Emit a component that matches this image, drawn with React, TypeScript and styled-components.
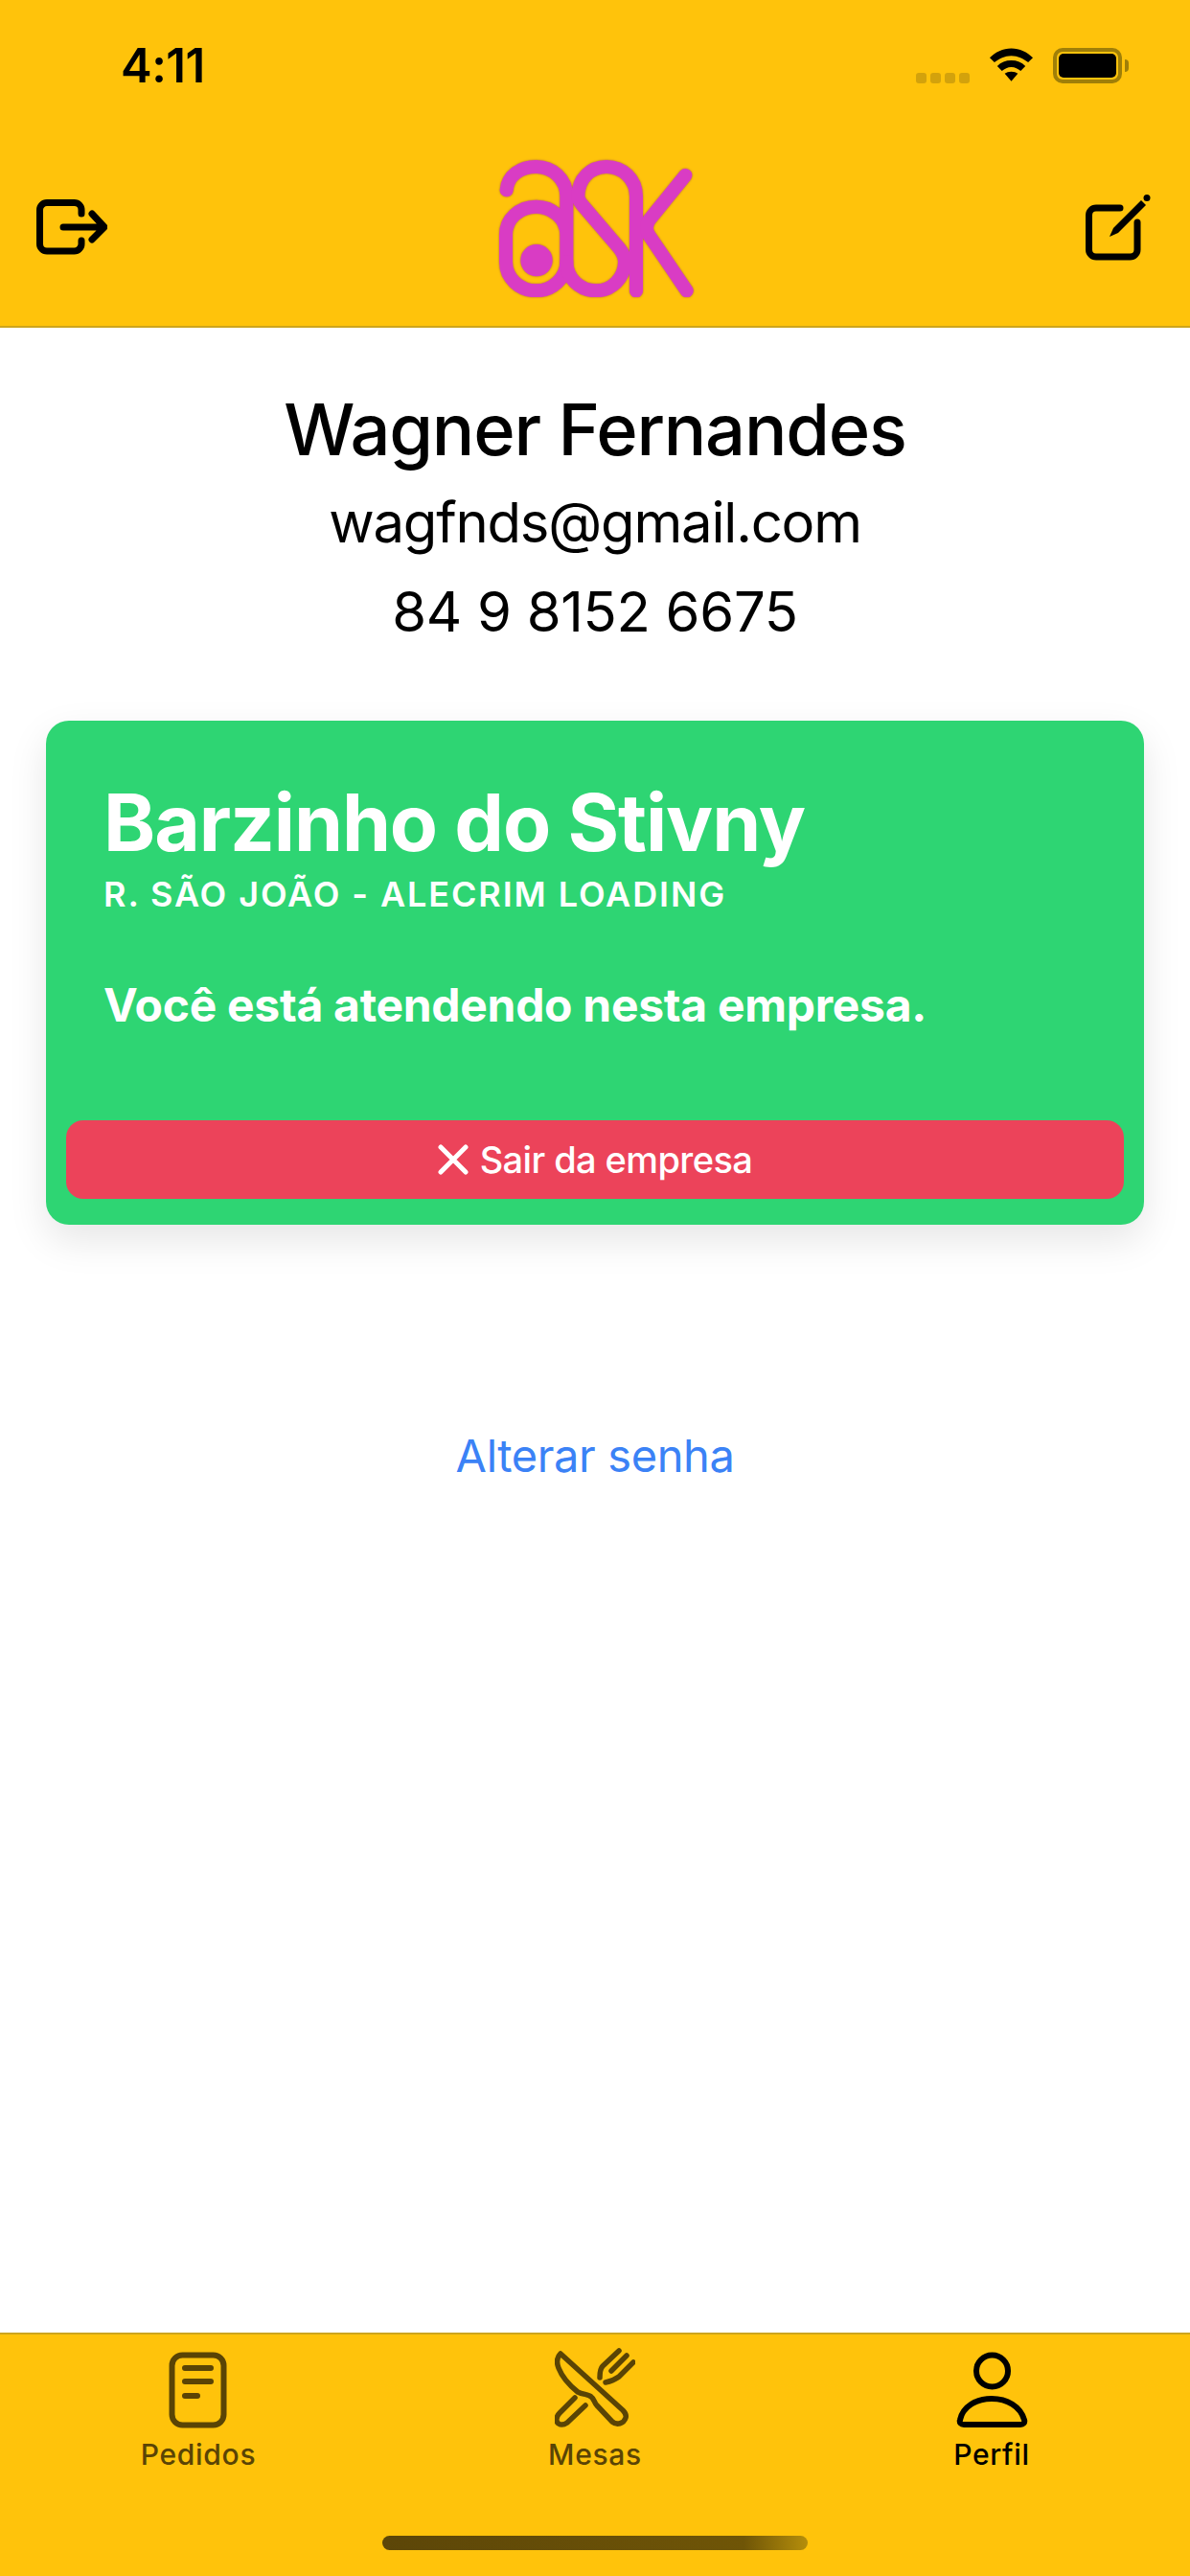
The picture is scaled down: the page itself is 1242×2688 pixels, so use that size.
import React from "react";
import styled, { createGlobalStyle } from "styled-components";

const GlobalStyle = createGlobalStyle`
html, body {
  margin: 0;
  padding: 0;
  background: #ffffff;
}
body {
  font-family: 'Inter', 'Liberation Sans', sans-serif;
}
`

const LogoutIcon = () => (
  <svg width="74" height="58" viewBox="0 0 74 58" fill="none" stroke="#000" strokeWidth="7" strokeLinecap="round" strokeLinejoin="round">
    <path d="M47 15V11a7.5 7.5 0 0 0-7.5-7.5H11A7.5 7.5 0 0 0 3.5 11v35.500a7.500 7.500 0 0 0 7.500 7.500h28.500a7.500 7.500 0 0 0 7.500-7.500V43" />
    <path d="M28 29h42M58 15l13 14-13 13" />
  </svg>
)

const EditIcon = () => (
  <svg width="70" height="69" viewBox="0 0 70 69" fill="none" stroke="#000" strokeWidth="7" strokeLinecap="round" strokeLinejoin="round">
    <path d="M36 14H11a7.500 7.500 0 0 0-7.500 7.500V57.500A7.500 7.500 0 0 0 11 65h35.500a7.500 7.500 0 0 0 7.500-7.500V29" />
    <path d="M25 44L29 35L58 6L63 11L34 40Z" fill="#000" stroke="none" />
    <circle cx="64" cy="3.500" r="3.500" fill="#000" stroke="none" />
  </svg>
)

const AskLogo = () => (
  <LogoSvg width="210" height="145" viewBox="110 70 630 435" fill="none" stroke="#d93cc4" strokeWidth="42" strokeLinecap="round" strokeLinejoin="round">
    <path d="M142 170C146 125 185 97 235 97C285 97 330 135 330 190V395C330 445 285 485 235 485C182 485 140 445 140 395V310C140 260 182 222 235 222C285 222 330 260 330 310" />
    <path d="M330 395C330 445 370 485 422 485C472 485 512 445 512 395C512 375 505 365 495 352L378 215C370 205 366 195 366 190C366 135 405 97 455 97C505 97 548 135 548 190V486" />
    <path d="M702 124L590 262C578 278 578 298 590 314L706 485" />
    <circle cx="236" cy="390" r="50" fill="#d93cc4" stroke="none" />
  </LogoSvg>
)

const OrdersIcon = () => (
  <svg width="62" height="80" viewBox="0 0 62 80" fill="none" stroke="currentColor" strokeWidth="6" strokeLinecap="round" strokeLinejoin="round">
    <rect x="3.500" y="3.500" width="54" height="73" rx="11" />
    <path d="M17 17h27M17 31h27M17 46h13" />
  </svg>
)

const TablesIcon = () => (
  <svg width="84" height="84" viewBox="0 0 84 84" fill="none" stroke="currentColor" strokeWidth="5.500" strokeLinecap="round" strokeLinejoin="round">
    <path d="M6 6C2 10 2 16 4 21C8 31 14 38 24 46C30 49 35 48 38 51C41 53 41 57 44 60L60 77C65 81 72 79 74 73C75 70 73 67 71 65Z" />
    <path d="M21 52L5 68C1 72 1 77 4 79C7 81 10 80 13 78L32 60" />
    <path d="M67 3L50 19C47 22 47 27 47 31M75 8L59 24M82 15L67 30C63 33 58 35 53 36" />
  </svg>
)

const ProfileIcon = () => (
  <svg width="76" height="80" viewBox="0 0 76 80" fill="none" stroke="currentColor" strokeWidth="6" strokeLinecap="round" strokeLinejoin="round">
    <circle cx="38.500" cy="20" r="16.500" />
    <path d="M5 71C8 57 22 49 38 49C54 49 68 57 72 71C73 74 71 76 68 76H9C6 76 4 74 5 71Z" />
  </svg>
)

const CloseIcon = () => (
  <svg width="32" height="32" viewBox="0 0 32 32" fill="none" stroke="#fff" strokeWidth="5" strokeLinecap="round">
    <path d="M3 3l26 26M29 3L3 29" />
  </svg>
)

const WifiIcon = () => (
  <svg width="47" height="36" viewBox="0 0 48 36" fill="#000">
    <path d="M24 0C33 0 41 4 47 10L42 15C37 11 31 8 24 8C17 8 11 11 6 15L1 10C7 4 15 0 24 0Z" />
    <path d="M24 13C30 13 35 15 39 19L34 24C31 22 28 20 24 20C20 20 17 22 14 24L9 19C13 15 18 13 24 13Z" />
    <path d="M24 25C27 25 29 26 31 27L24 35L17 27C19 26 21 25 24 25Z" />
  </svg>
)

const App = () => {
  return (
    <>
      <GlobalStyle />
      <Screen>
        <Header>
          <StatusBar>
            <Time>4:11</Time>
            <StatusIcons>
              <Signal>
                <SignalDot />
                <SignalDot />
                <SignalDot />
                <SignalDot />
              </Signal>
              <WifiIcon />
              <Battery>
                <BatteryFill />
              </Battery>
            </StatusIcons>
          </StatusBar>
          <NavBar>
            <LogoutIcon />
            <AskLogo />
            <EditIcon />
          </NavBar>
        </Header>
        <Content>
          <Name>Wagner Fernandes</Name>
          <Contact $spacing={-1.2}>wagfnds@gmail.com</Contact>
          <Contact $spacing={-0.3}>84 9 8152 6675</Contact>
          <Card>
            <CompanyName>Barzinho do Stivny</CompanyName>
            <Address>R. SÃO JOÃO - ALECRIM LOADING</Address>
            <Notice>Você está atendendo nesta empresa.</Notice>
            <LeaveButton>
              <CloseIcon />
              Sair da empresa
            </LeaveButton>
          </Card>
          <PasswordLink>Alterar senha</PasswordLink>
        </Content>
        <TabBar>
          <Tabs>
            <Tab>
              <OrdersIcon />
              <TabLabel>Pedidos</TabLabel>
            </Tab>
            <Tab>
              <TablesIcon />
              <TabLabel>Mesas</TabLabel>
            </Tab>
            <Tab $active>
              <ProfileIcon />
              <TabLabel>Perfil</TabLabel>
            </Tab>
          </Tabs>
          <HomeIndicator />
        </TabBar>
      </Screen>
    </>
  )
}
export default App;

const Screen = styled.div`
width: 1242px;
height: 2688px;
display: flex;
flex-direction: column;
background: #ffffff;
overflow: hidden;
`

const Header = styled.div`
height: 342px;
box-sizing: border-box;
background-color: #ffc30b;
border-bottom: 2px solid #cda51e;
display: flex;
flex-direction: column;
`

const StatusBar = styled.div`
height: 136px;
box-sizing: border-box;
padding: 0 71px 0 126px;
display: flex;
align-items: center;
justify-content: space-between;
`

const Time = styled.div`
font-size: 49px;
font-weight: 600;
letter-spacing: -0.5px;
color: #000000;
`

const StatusIcons = styled.div`
display: flex;
align-items: center;
gap: 20px;
`

const Signal = styled.div`
display: flex;
gap: 4px;
margin-top: 26px;
`

const SignalDot = styled.div`
width: 11px;
height: 11px;
border-radius: 3px;
background: #d3a20c;
`

const Battery = styled.div`
position: relative;
width: 72px;
height: 37px;
box-sizing: border-box;
border: 4px solid #a07f08;
border-radius: 10px;
padding: 2px;
&::after {
  content: '';
  position: absolute;
  right: -11px;
  top: 8px;
  width: 4px;
  height: 13px;
  background: #a07f08;
  border-radius: 0 5px 5px 0;
}
`

const BatteryFill = styled.div`
width: 100%;
height: 100%;
border-radius: 5px;
background: #000000;
`

const NavBar = styled.div`
flex: 1;
box-sizing: border-box;
padding: 0 39px 2px 38px;
display: flex;
align-items: center;
justify-content: space-between;
`

const LogoSvg = styled.svg`
filter: drop-shadow(0 0 1px rgba(120, 40, 110, 0.6));
`

const Content = styled.div`
flex: 1;
display: flex;
flex-direction: column;
align-items: center;
padding-top: 62px;
`

const Name = styled.div`
font-size: 74px;
line-height: 88px;
font-weight: 500;
letter-spacing: -1.2px;
color: #000000;
`

const Contact = styled.div<{ $spacing: number }>`
font-size: 58px;
line-height: 68px;
margin-top: 25px;
letter-spacing: ${(p) => p.$spacing}px;
color: #000000;
&:nth-child(2) {
  margin-top: 19px;
}
`

const Card = styled.div`
width: 1146px;
height: 526px;
box-sizing: border-box;
margin-top: 80px;
padding: 60px 21px 27px;
border-radius: 24px;
background-color: #2ed573;
box-shadow: 0 16px 40px rgba(0, 0, 0, 0.1);
display: flex;
flex-direction: column;
`

const CompanyName = styled.div`
font-size: 82px;
line-height: 94px;
font-weight: 700;
letter-spacing: -1.1px;
padding-left: 39px;
color: #ffffff;
`

const Address = styled.div`
font-size: 36px;
line-height: 44px;
font-weight: 600;
letter-spacing: 1.9px;
margin-top: 5px;
padding-left: 39px;
color: #ffffff;
`

const Notice = styled.div`
font-size: 48px;
line-height: 56px;
font-weight: 700;
letter-spacing: -0.3px;
margin-top: 66px;
padding-left: 39px;
color: #ffffff;
`

const LeaveButton = styled.div`
margin-top: auto;
height: 82px;
border-radius: 18px;
background-color: #ec435a;
color: #ffffff;
font-size: 38px;
font-weight: 500;
letter-spacing: -0.6px;
display: flex;
align-items: center;
justify-content: center;
gap: 12px;
`

const PasswordLink = styled.div`
margin-top: 212px;
font-size: 47px;
line-height: 58px;
letter-spacing: -0.4px;
color: #3b82f6;
`

const TabBar = styled.div`
height: 254px;
box-sizing: border-box;
background-color: #ffc30b;
border-top: 2px solid #cda51e;
display: flex;
flex-direction: column;
align-items: center;
`

const Tabs = styled.div`
width: 100%;
display: grid;
grid-template-columns: repeat(3, 1fr);
padding-top: 14px;
`

const Tab = styled.div<{ $active?: boolean }>`
height: 130px;
display: flex;
flex-direction: column;
align-items: center;
justify-content: flex-end;
color: ${(p) => (p.$active ? "#000000" : "#5a4405")};
`

const TabLabel = styled.div`
font-size: 30px;
line-height: 38px;
font-weight: 500;
letter-spacing: 0.7px;
margin-top: 8px;
`

const HomeIndicator = styled.div`
width: 444px;
height: 15px;
margin-top: 66px;
border-radius: 8px;
background: linear-gradient(90deg, #5c4608 0%, #6f5507 85%, #b58e0b 100%);
`
